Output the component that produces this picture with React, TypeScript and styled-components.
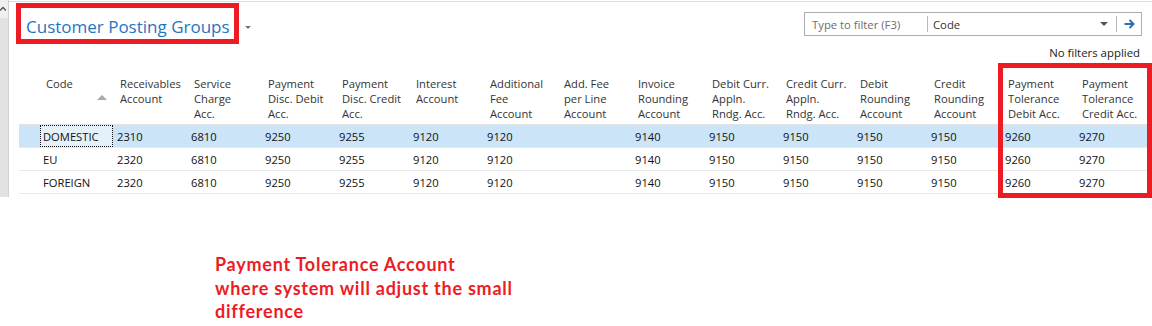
import React from "react";
import styled, { createGlobalStyle } from "styled-components";

const Global = createGlobalStyle`
  html, body { margin: 0; padding: 0; background: #ffffff; }
  body { font-family: "Open Sans", "Noto Sans", sans-serif; color: #222; }
`;

const Page = styled.div`
  display: flex;
  align-items: flex-start;
  width: 1152px;
  height: 326px;
  overflow: hidden;
  background: #fff;
`;

const SideStrip = styled.div`
  width: 8px;
  height: 197px;
  flex: none;
  background: #e2e2e2;
  border-right: 1px solid #d0d0d0;
  display: flex;
  flex-direction: column;
`;

const StripTop = styled.div`
  height: 18px;
  background: #f0f0f0;
  display: flex;
  align-items: flex-start;
  padding-top: 6px;
  box-sizing: border-box;
`;

const Main = styled.div`
  flex: 1;
  margin-top: 1px;
  border-top: 1px solid #dcdcdc;
  display: flex;
  flex-direction: column;
  min-width: 0;
`;

const TopBar = styled.div`
  display: flex;
  justify-content: space-between;
  align-items: flex-start;
`;

const TitleBox = styled.div`
  margin-left: 7px;
  margin-top: 1px;
  width: 223px;
  height: 41px;
  box-sizing: border-box;
  border: 5px solid #ed1c24;
  padding: 6px 0 0 5px;
  position: relative;
`;

const Title = styled.h1`
  margin: 0;
  font-family: "Open Sans", "Noto Sans", sans-serif;
  font-weight: 400;
  font-size: 17px;
  line-height: 25px;
  color: #1f74c4;
  white-space: nowrap;
`;

const TitleCaret = styled.span`
  position: absolute;
  left: 224px;
  top: 18px;
  width: 0;
  height: 0;
  border-left: 3px solid transparent;
  border-right: 3px solid transparent;
  border-top: 3px solid #777;
`;

const FilterGroup = styled.div`
  margin-right: 10px;
  margin-top: 10px;
  display: flex;
  flex-direction: column;
  align-items: flex-end;
`;

const FilterBox = styled.div`
  width: 338px;
  height: 24px;
  box-sizing: border-box;
  border: 1px solid #abadb3;
  display: flex;
  align-items: center;
  font-size: 11.3px;
`;

const FilterInput = styled.div`
  width: 122px;
  padding-left: 7px;
  box-sizing: border-box;
  color: #6d6d6d;
  white-space: nowrap;
`;

const Sep = styled.div`
  width: 1px;
  height: 16px;
  background: #b8b8b8;
  flex: none;
`;

const FieldName = styled.div`
  flex: 1;
  padding-left: 5px;
  color: #333;
`;

const Caret = styled.span`
  width: 0;
  height: 0;
  border-left: 4px solid transparent;
  border-right: 4px solid transparent;
  border-top: 4px solid #555;
  margin-right: 8px;
`;

const GoButton = styled.div`
  width: 24px;
  display: flex;
  justify-content: center;
  align-items: center;
`;

const NoFilters = styled.div`
  margin-top: 9px;
  margin-right: 2px;
  font-size: 11.4px;
  line-height: 15px;
  color: #222;
`;

const Table = styled.div`
  margin-left: 10px;
  margin-top: 10px;
  width: 1130px;
  position: relative;
`;

const cols = "21px 73px repeat(14, 74px)";

const HeadRow = styled.div`
  display: grid;
  grid-template-columns: ${cols};
  border-bottom: 1px solid #e3e3e3;
  padding: 6px 0 3px;
`;

const HeadCell = styled.div<{ $first?: boolean }>`
  padding-left: ${(p) => (p.$first ? "6px" : "7px")};
  padding-right: 6px;
  font-size: 11.2px;
  line-height: 15px;
  color: #333;
  white-space: nowrap;
  display: flex;
  justify-content: space-between;
`;

const HeadLines = styled.div`
  display: flex;
  flex-direction: column;
`;

const SortArrow = styled.span`
  align-self: center;
  margin-top: -3px;
  width: 0;
  height: 0;
  border-left: 5px solid transparent;
  border-right: 5px solid transparent;
  border-bottom: 5px solid #a9a9a9;
`;

const Row = styled.div<{ $selected?: boolean }>`
  display: grid;
  grid-template-columns: ${cols};
  height: 23px;
  box-sizing: border-box;
  border-bottom: 1px solid #e9e9e9;
  background: ${(p) => (p.$selected ? "#cce4f7" : "#fff")};
`;

const Cell = styled.div<{ $focus?: boolean }>`
  font-size: 11.2px;
  color: #111;
  display: flex;
  align-items: center;
  white-space: nowrap;
  box-sizing: border-box;
  padding-left: ${(p) => (p.$focus !== undefined ? "2px" : "4px")};
  border: ${(p) => (p.$focus ? "1px dotted #111" : p.$focus === false ? "1px solid transparent" : "none")};
  background: ${(p) => (p.$focus ? "#e4f0fa" : "transparent")};
`;

const Highlight = styled.div`
  position: absolute;
  left: 979px;
  top: -7px;
  width: 154px;
  height: 135px;
  box-sizing: border-box;
  border: 5px solid #ed1c24;
  pointer-events: none;
`;

const Note = styled.p`
  margin: 59px 0 0 206px;
  font-family: "Lato", "Open Sans", sans-serif;
  font-weight: 700;
  font-size: 18px;
  letter-spacing: 0.75px;
  line-height: 23.5px;
  color: #ed1c24;
`;

const headers: string[][] = [
  ["Code"],
  ["Receivables", "Account"],
  ["Service", "Charge", "Acc."],
  ["Payment", "Disc. Debit", "Acc."],
  ["Payment", "Disc. Credit", "Acc."],
  ["Interest", "Account"],
  ["Additional", "Fee", "Account"],
  ["Add. Fee", "per Line", "Account"],
  ["Invoice", "Rounding", "Account"],
  ["Debit Curr.", "Appln.", "Rndg. Acc."],
  ["Credit Curr.", "Appln.", "Rndg. Acc."],
  ["Debit", "Rounding", "Account"],
  ["Credit", "Rounding", "Account"],
  ["Payment", "Tolerance", "Debit Acc."],
  ["Payment", "Tolerance", "Credit Acc."],
];

const rows: { code: string; values: string[] }[] = [
  { code: "DOMESTIC", values: ["2310", "6810", "9250", "9255", "9120", "9120", "", "9140", "9150", "9150", "9150", "9150", "9260", "9270"] },
  { code: "EU", values: ["2320", "6810", "9250", "9255", "9120", "9120", "", "9140", "9150", "9150", "9150", "9150", "9260", "9270"] },
  { code: "FOREIGN", values: ["2320", "6810", "9250", "9255", "9120", "9120", "", "9140", "9150", "9150", "9150", "9150", "9260", "9270"] },
];

export default function App() {
  return (
    <>
      <Global />
      <Page>
        <SideStrip>
          <StripTop>
            <svg width="6" height="6" viewBox="0 0 6 6">
              <path d="M0 4.5 L3 1.5 L6 4.5" fill="none" stroke="#555" strokeWidth="1.3" />
            </svg>
          </StripTop>
        </SideStrip>
        <Main>
          <TopBar>
            <TitleBox>
              <Title>Customer Posting Groups</Title>
              <TitleCaret />
            </TitleBox>
            <FilterGroup>
              <FilterBox>
                <FilterInput>Type to filter (F3)</FilterInput>
                <Sep />
                <FieldName>Code</FieldName>
                <Caret />
                <Sep />
                <GoButton>
                  <svg width="11" height="10" viewBox="0 0 11 10">
                    <path d="M0.5 5 H9" stroke="#2f6db5" strokeWidth="2" />
                    <path d="M5.5 1 L9.5 5 L5.5 9" fill="none" stroke="#2f6db5" strokeWidth="2" />
                  </svg>
                </GoButton>
              </FilterBox>
              <NoFilters>No filters applied</NoFilters>
            </FilterGroup>
          </TopBar>
          <Table>
            <HeadRow>
              <div />
              {headers.map((lines, i) => (
                <HeadCell key={i} $first={i === 0}>
                  <HeadLines>
                    {lines.map((l, j) => (
                      <span key={j}>{l}</span>
                    ))}
                  </HeadLines>
                  {i === 0 && <SortArrow />}
                </HeadCell>
              ))}
            </HeadRow>
            {rows.map((r, ri) => (
              <Row key={r.code} $selected={ri === 0}>
                <div />
                <Cell $focus={ri === 0}>{r.code}</Cell>
                {r.values.map((v, vi) => (
                  <Cell key={vi}>{v}</Cell>
                ))}
              </Row>
            ))}
            <Highlight />
          </Table>
          <Note>
            Payment Tolerance Account
            <br />
            where system will adjust the small
            <br />
            difference
          </Note>
        </Main>
      </Page>
    </>
  );
}
